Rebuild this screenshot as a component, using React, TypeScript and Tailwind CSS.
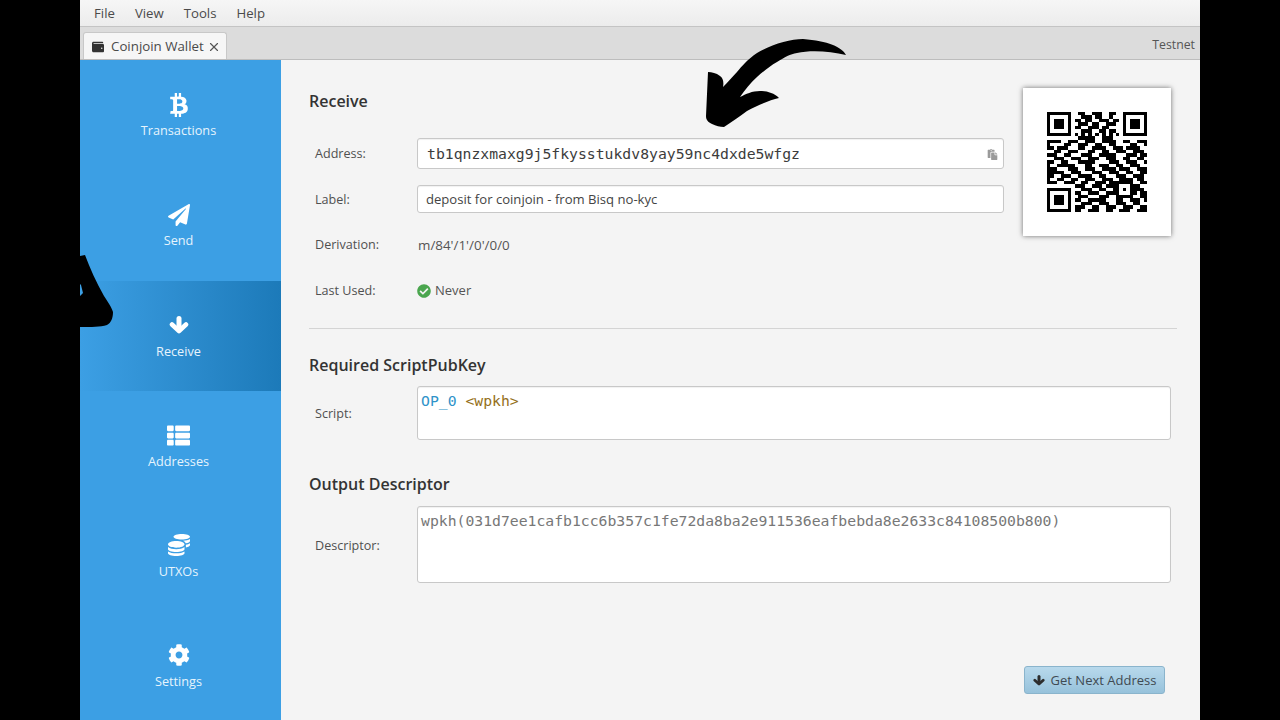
import { FaBtc, FaPaperPlane, FaThList, FaCoins, FaCog, FaWallet, FaCheckCircle, FaPaste } from "react-icons/fa";
import { X } from "lucide-react";
import type { ReactNode } from "react";

const F = "1111111";
const A = "1000001";
const C = "1011101";
const QR = [
  F + "0" + "0110011100110" + "0" + F,
  A + "0" + "0011101100100" + "0" + A,
  C + "0" + "1101100111011" + "0" + C,
  C + "0" + "0111011001110" + "0" + C,
  C + "0" + "1100111011000" + "0" + C,
  A + "0" + "0011100110110" + "0" + A,
  F + "0" + "1010101010101" + "0" + F,
  "00000000" + "0111110011100" + "00000000",
  "11110011100111001111001100111",
  "10000110011100110011000011001",
  "11011100011001111001110111100",
  "00110011100011001100111001110",
  "11100110001110011111000111011",
  "00111001110011100111001100110",
  "11001100011111000011100111001",
  "10011111000110011100110011100",
  "11100011100111001111011100111",
  "11111001110001110011100110011",
  "11001110011110011000111001110",
  "10011001100111001110011110110",
  "11100111001100111011" + "11111" + "0011",
  "00000000" + "111001110111" + "10001" + "1100",
  F + "0" + "001110011001" + "10101" + "1110",
  A + "0" + "110011100111" + "10001" + "1011",
  C + "0" + "011100011100" + "11111" + "0011",
  C + "0" + "110011111000110011101",
  C + "0" + "001110011100111001100",
  A + "0" + "111001100111001110011",
  F + "0" + "110011100110011100111",
];

function QrCode() {
  return (
    <svg width="100" height="100" viewBox="0 0 29 29" shapeRendering="crispEdges" className="blur-[0.4px]">
      {QR.map((row, y) =>
        row.split("").map((c, x) => (c === "1" ? <rect key={`${x}-${y}`} x={x} y={y} width="1" height="1" fill="#000" /> : null))
      )}
    </svg>
  );
}

function ChunkyArrow({ w, h, color }: { w: number; h: number; color: string }) {
  return (
    <svg width={w} height={h} viewBox="0 0 20 18" fill="none" stroke={color} strokeLinecap="round" strokeLinejoin="round">
      <path d="M10 2.5 V13" strokeWidth="5" />
      <path d="M3 8.5 L10 15 L17 8.5" strokeWidth="4.6" />
    </svg>
  );
}

function NavItem({ icon, label, cls, labelCls }: { icon: ReactNode; label: string; cls: string; labelCls: string }) {
  return (
    <div className={`shrink-0 flex flex-col items-center pr-[4px] ${cls}`}>
      <div className="h-[24px] flex items-center justify-center text-white text-[22px]">{icon}</div>
      <div className={`text-[12.7px] leading-[18px] text-[#e6f4fd] ${labelCls}`}>{label}</div>
    </div>
  );
}

function Row({ label, h, children }: { label: string; h: string; children: ReactNode }) {
  return (
    <div className={`flex items-center pl-[6px] ${h}`}>
      <div className="w-[102px] shrink-0 pt-[2px] text-[12.6px] text-[#505050]">{label}</div>
      <div className="flex-1 min-w-0">{children}</div>
    </div>
  );
}

const inputCls = "bg-white border border-[#c8c8c8] rounded-[3px] shadow-[inset_0_1px_1px_rgba(0,0,0,0.06)]";

export default function App() {
  return (
    <div className="h-[720px] w-[1280px] overflow-hidden bg-black flex justify-center font-['Open_Sans','Liberation_Sans',sans-serif]">
      <div className="relative w-[1120px] h-full flex flex-col bg-[#f4f4f4] overflow-hidden">
        <div className="h-[27px] shrink-0 flex items-center gap-[20px] pl-[14px] pt-[1px] text-[13.2px] text-[#4a4a4a] bg-gradient-to-b from-[#f6f6f6] to-[#ececec] border-b border-[#c4c4c4] shadow-[0_1px_2px_rgba(0,0,0,0.15)]">
          <span>File</span>
          <span>View</span>
          <span>Tools</span>
          <span>Help</span>
        </div>
        <div className="h-[33px] shrink-0 flex items-end justify-between pl-[3px] pr-[5px] bg-[#dcdcdc] border-b border-[#bdbdbd]">
          <div className="h-[27px] w-[144px] flex items-center gap-[7px] pl-[8px] pt-[1px] bg-[#f6f6f6] rounded-t-[3px] border border-b-0 border-[#c8c8c8] text-[13.3px] text-[#4a4a4a]">
            <FaWallet className="text-[12px] text-[#333]" />
            <span className="whitespace-nowrap">Coinjoin Wallet</span>
            <X size={14} strokeWidth={2} className="text-[#555] -ml-[4px]" />
          </div>
          <span className="text-[12.3px] leading-[16px] pb-[6px] text-[#555]">Testnet</span>
        </div>
        <div className="flex-1 flex min-h-0">
          <div className="w-[201px] shrink-0 bg-[#3c9fe4] flex flex-col">
            <NavItem icon={<FaBtc className="text-[24px]" />} label="Transactions" cls="h-[110px] pt-[33px]" labelCls="mt-[4px]" />
            <NavItem icon={<FaPaperPlane />} label="Send" cls="h-[111px] pt-[33px]" labelCls="mt-[4px]" />
            <NavItem icon={<ChunkyArrow w={20} h={18} color="#ffffff" />} label="Receive" cls="h-[110px] pt-[32px] bg-gradient-to-r from-[#3c9fe4] to-[#1c7ab9]" labelCls="mt-[5px]" />
            <NavItem icon={<FaThList className="text-[23px]" />} label="Addresses" cls="h-[110px] pt-[32px]" labelCls="mt-[5px]" />
            <NavItem icon={<FaCoins />} label="UTXOs" cls="h-[110px] pt-[32px]" labelCls="mt-[5px]" />
            <NavItem icon={<FaCog />} label="Settings" cls="h-[110px] pt-[32px]" labelCls="mt-[5px]" />
          </div>
          <div className="flex-1 min-w-0 flex flex-col pl-[28px] pr-[23px]">
            <div className="flex items-start pt-[28px]">
              <div className="w-[695px] shrink-0 mr-[19px]">
                <div className="h-[26px] text-[16px] leading-[26px] font-semibold text-[#333]">Receive</div>
                <div className="mt-[24px]">
                  <Row label="Address:" h="h-[31px]">
                    <div className={`${inputCls} h-[31px] flex items-center justify-between pl-[9px] pt-[1px] pr-[5px]`}>
                      <span className="font-['DejaVu_Sans_Mono',monospace] text-[14.75px] text-[#3c3c3c]">tb1qnzxmaxg9j5fkysstukdv8yay59nc4dxde5wfgz</span>
                      <FaPaste className="text-[11px] text-[#9a9a9a]" />
                    </div>
                  </Row>
                </div>
                <div className="mt-[16px]">
                  <Row label="Label:" h="h-[28px]">
                    <div className={`${inputCls} h-[28px] flex items-center pl-[8px] pt-[1px] text-[13.1px] text-[#444]`}>deposit for coinjoin - from Bisq no-kyc</div>
                  </Row>
                </div>
                <div className="mt-[17px]">
                  <Row label="Derivation:" h="h-[28px]">
                    <div className="pl-[1px] pt-[2px] text-[13.4px] text-[#555]">m/84'/1'/0'/0/0</div>
                  </Row>
                </div>
                <div className="mt-[18px]">
                  <Row label="Last Used:" h="h-[28px]">
                    <div className="flex items-center gap-[4px] pt-[2px] text-[13px] text-[#555]">
                      <FaCheckCircle className="text-[14px] text-[#4aa64e]" />
                      <span>Never</span>
                    </div>
                  </Row>
                </div>
              </div>
              <div className="w-[148px] h-[148px] shrink-0 bg-white shadow-[0_0_5px_rgba(0,0,0,0.55)] flex items-center justify-center">
                <QrCode />
              </div>
            </div>
            <div className="mt-[24px] border-t border-[#d4d4d4]" />
            <div className="mt-[23px] h-[26px] text-[16px] leading-[26px] font-semibold text-[#333]">Required ScriptPubKey</div>
            <div className="mt-[8px] mr-[6px] flex items-center pl-[6px] h-[54px]">
              <div className="w-[102px] shrink-0 pt-[2px] text-[12.6px] text-[#505050]">Script:</div>
              <div className={`${inputCls} flex-1 h-[54px] pl-[3px] pt-[4px] font-['DejaVu_Sans_Mono',monospace] text-[14.75px] leading-[20px]`}>
                <span className="text-[#2f93c9]">OP_0</span> <span className="text-[#94701a]">&lt;wpkh&gt;</span>
              </div>
            </div>
            <div className="mt-[31px] h-[26px] text-[16px] leading-[26px] font-semibold text-[#333]">Output Descriptor</div>
            <div className="mt-[9px] mr-[6px] flex items-center pl-[6px] h-[77px]">
              <div className="w-[102px] shrink-0 pt-[3px] text-[12.6px] text-[#505050]">Descriptor:</div>
              <div className={`${inputCls} flex-1 h-[77px] pl-[3px] pt-[4px] font-['DejaVu_Sans_Mono',monospace] text-[14.75px] leading-[20px] text-[#777] whitespace-nowrap`}>
                wpkh(031d7ee1cafb1cc6b357c1fe72da8ba2e911536eafbebda8e2633c84108500b800)
              </div>
            </div>
            <div className="mt-auto pb-[26px] pr-[12px] flex justify-end">
              <div className="h-[28px] w-[141px] flex items-center justify-center gap-[6px] pt-[1px] rounded-[3px] border border-[#8ab4cc] bg-gradient-to-b from-[#b8d9ec] to-[#97c2db] text-[13px] text-[#3f4a52]">
                <ChunkyArrow w={12} h={11} color="#2d2d2d" />
                <span>Get Next Address</span>
              </div>
            </div>
          </div>
        </div>
        <svg className="absolute left-0 top-0 pointer-events-none" width="1120" height="720" viewBox="80 0 1120 720">
          <path fill="#000" d="M846 55 C842 47 828 41 803 39 C790 39 772 44 757 53 C748 59 742 66 737 72 C732 77 727 83 723 87 C724 82 723 78 720 76 C716 73 712 72 708 72 L706 116 C706 120 708 122 712 124 C716 126 720 127 724 127 C732 122 740 116 747 111 C758 105 770 100 779 98 C774 93 767 91 760 91 C752 91 746 94 740 97 C745 90 750 83 757 77 C764 71 770 66 777 62 C785 57 790 54 797 53 C810 50 830 51 846 55 Z" />
          <path fill="#000" d="M80 256 L85 255 C90 268 96 282 104 296 C108 302 112 308 113 312 C113 318 111 323 107 325 C100 327 92 327 80 327 L80 296 L83 293 L81 285 L80 284 Z" />
        </svg>
      </div>
    </div>
  );
}
